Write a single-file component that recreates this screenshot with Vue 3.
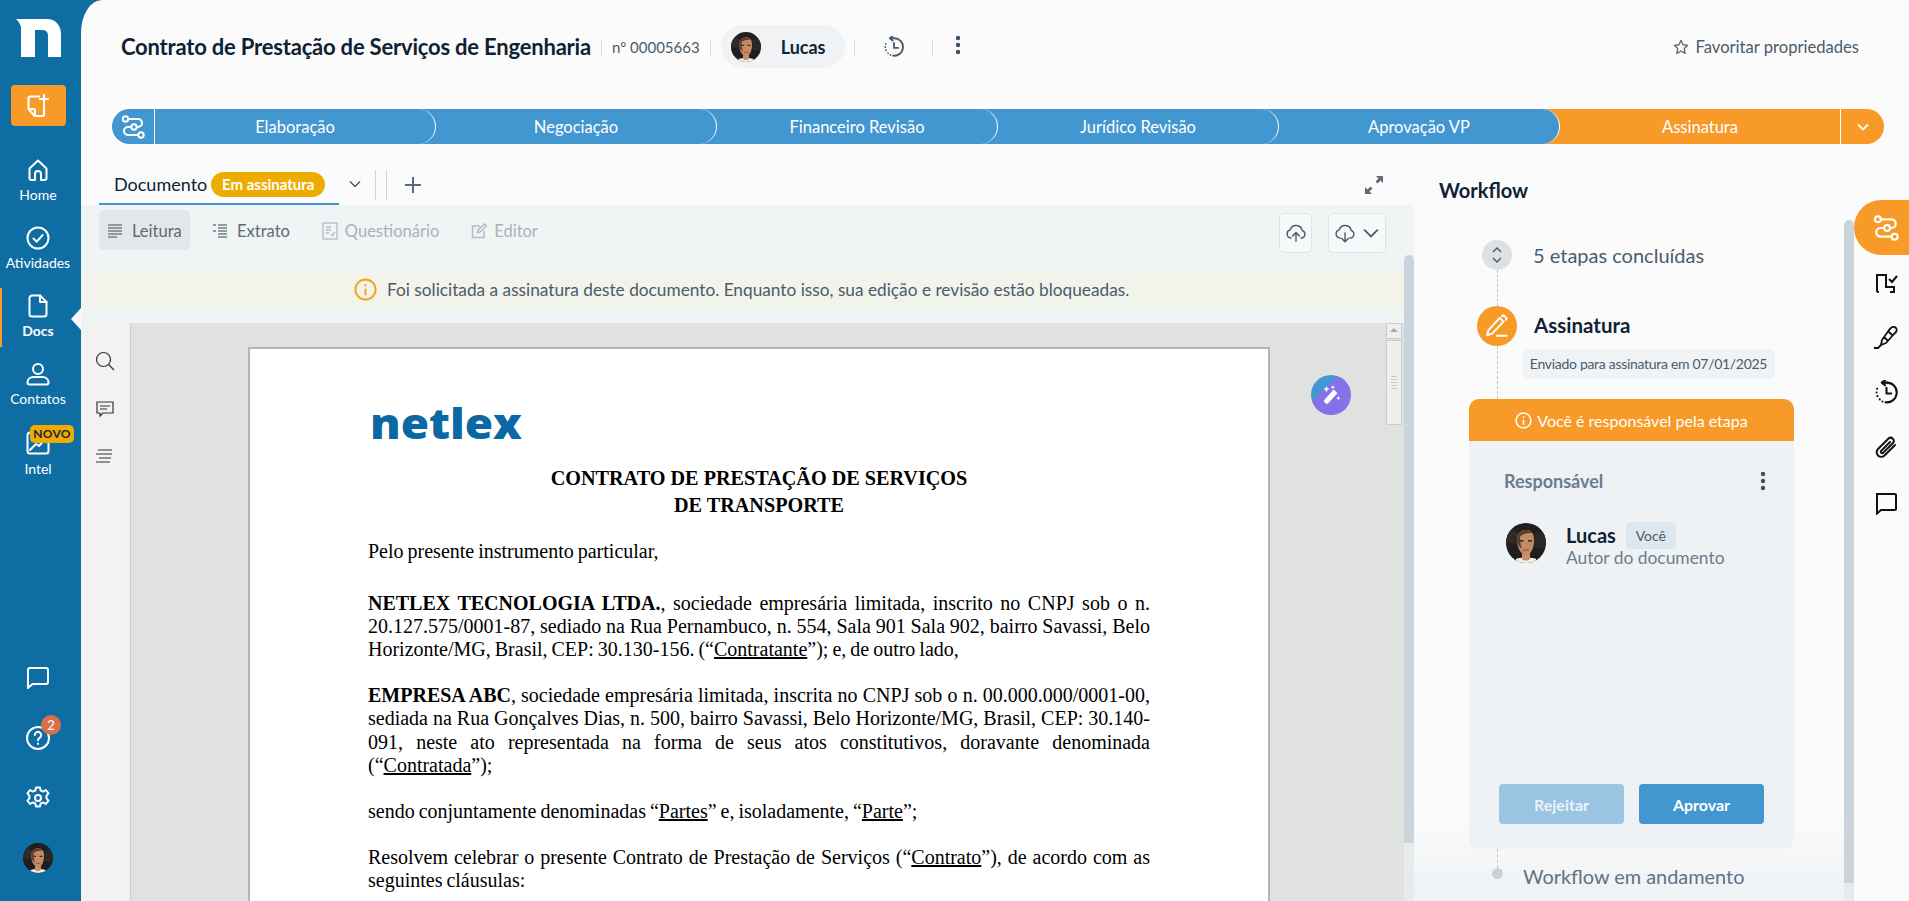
<template>
  <div class="app">
    <svg class="defs" width="0" height="0" aria-hidden="true">
      <defs>
        <clipPath id="avatar-clip"><circle cx="20" cy="20" r="20" /></clipPath>
        <symbol id="avatar" viewBox="0 0 40 40">
          <g clip-path="url(#avatar-clip)">
            <rect width="40" height="40" fill="#1f1d1d" />
            <circle cx="6" cy="14" r="7" fill="#2e2b2a" />
            <circle cx="33" cy="17" r="8" fill="#2a2827" />
            <path d="M10 36c3-2 17-2 20 0v6H10z" fill="#f2efe9" />
            <path d="M16 27h8v9c-2 2-6 2-8 0z" fill="#c98e63" />
            <path d="M11 17c0-7 4-10 9-10s8 3 8 10c0 8-3 15-8 15s-9-7-9-15z" fill="#c48c63" />
            <path d="M11 17c0-7 4-10 9-10 3 0 5 1 6 3-5 0-10 1-12 4 0 5 1 9 2 12-3-2-5-5-5-9z" fill="#5f3d2c" />
            <rect x="13.5" y="17" width="4" height="1.6" fill="#3a2a24" />
            <rect x="22" y="17" width="4" height="1.6" fill="#3a2a24" />
            <rect x="17" y="26.5" width="6" height="1.2" fill="#8d5540" />
          </g>
        </symbol>
        <symbol id="route" viewBox="0 0 24 24">
          <g fill="none" stroke="currentColor" stroke-width="2">
            <circle cx="4.5" cy="4" r="2.7" />
            <circle cx="13" cy="12" r="2.7" />
            <circle cx="20" cy="20" r="2.7" />
            <path d="M7.2 4H17a4 4 0 0 1 0 8h-1.3M10.3 12H7a4 4 0 0 0 0 8h10.3" />
          </g>
        </symbol>
        <symbol id="history" viewBox="0 0 24 24">
          <g fill="none" stroke="currentColor" stroke-width="2" stroke-linecap="round" stroke-linejoin="round">
            <path d="M12 2.5a9.5 9.5 0 1 1-1 18.9" />
            <path d="M12 2.5H7.5M7.5 2.5l3-2.3M7.5 2.5l3 2.6" />
            <path d="M3 8.5v0M2.5 12v0M3.3 15.5v0M5.5 18.6v0M8 20.6v0" />
            <path d="M12 7.5V13h4.5" />
          </g>
        </symbol>
        <symbol id="dots" viewBox="0 0 6 20">
          <circle cx="3" cy="3" r="2.2" fill="currentColor" />
          <circle cx="3" cy="10" r="2.2" fill="currentColor" />
          <circle cx="3" cy="17" r="2.2" fill="currentColor" />
        </symbol>
      </defs>
    </svg>

    <aside class="sidebar">
      <svg class="logo" width="45" height="38" viewBox="0 0 45 38">
        <path d="M0 0H31C39 0 45 6 45 15V38H32V17C32 13 30 11 26 11H19V38H5V9C5 6 3 3 0 0Z" fill="#fff" />
      </svg>
      <button class="new-doc">
        <svg width="24" height="24" viewBox="0 0 24 24" fill="none" stroke="#fff" stroke-width="2.2" stroke-linejoin="round" stroke-linecap="round">
          <path d="M13 2.5H4a1.5 1.5 0 0 0-1.500 1.500v11l6 7h8a1.500 1.500 0 0 0 1.500-1.500V11" />
          <path d="M3 15h4.500a1.500 1.500 0 0 1 1.500 1.500V22" />
          <path d="M18 1v8M14 5h8" />
        </svg>
      </button>
      <nav class="nav">
        <a class="nav-item">
          <svg class="nav-icon" viewBox="0 0 24 24"><path d="M3.500 10.500 12 2.500l8.500 8v9.500a2 2 0 0 1-2 2H15v-6a3 3 0 0 0-6 0v6H5.500a2 2 0 0 1-2-2z" /></svg>
          <span>Home</span>
        </a>
        <a class="nav-item">
          <svg class="nav-icon" viewBox="0 0 24 24"><circle cx="12" cy="12" r="10.500" /><path d="m7.500 12.500 3.200 3.200 6-6.700" /></svg>
          <span>Atividades</span>
        </a>
        <a class="nav-item active">
          <svg class="nav-icon" viewBox="0 0 24 24"><path d="M14 1.500H6a2.500 2.500 0 0 0-2.500 2.500v16A2.500 2.500 0 0 0 6 22.500h12a2.500 2.500 0 0 0 2.500-2.500V8z" /><path d="M14 1.500V8h6.500" /></svg>
          <span>Docs</span>
          <i class="notch"></i>
        </a>
        <a class="nav-item">
          <svg class="nav-icon" viewBox="0 0 24 24"><circle cx="12" cy="7" r="5" /><path d="M1.500 20.500c0-3.500 3-5.500 6-5.500h9c3 0 6 2 6 5.500 0 1.300-1 2-2 2h-17c-1 0-2-.7-2-2z" /></svg>
          <span>Contatos</span>
        </a>
        <a class="nav-item intel">
          <svg class="nav-icon" viewBox="0 0 24 24"><rect x="1.500" y="1.500" width="21" height="21" rx="2.500" /><path d="m4 19 6-6 3 2 6-7" /></svg>
          <span>Intel</span>
          <b class="novo">NOVO</b>
        </a>
      </nav>
      <div class="nav-bottom">
        <a class="nav-low">
          <svg class="nav-icon" viewBox="0 0 24 24"><path d="M4 2h16a2 2 0 0 1 2 2v12a2 2 0 0 1-2 2H6.500L2 22V4a2 2 0 0 1 2-2z" /></svg>
        </a>
        <a class="nav-low">
          <svg class="nav-icon" viewBox="0 0 24 24"><circle cx="12" cy="12" r="11" /><path d="M8.800 9a3.200 3.200 0 1 1 4.800 2.800c-1 .6-1.600 1.200-1.600 2.400M12 17.500v.5" /></svg>
          <b class="count">2</b>
        </a>
        <a class="nav-low">
          <svg class="nav-icon" viewBox="0 0 24 24"><circle cx="12" cy="12" r="3" /><path d="M10 1.500h4l.7 3 2.500 1.100 2.700-1.600 2.600 3.400-2 2.200v2.800l2 2.200-2.600 3.400-2.700-1.600-2.500 1.100-.7 3h-4l-.7-3-2.500-1.100L4 18l-2.600-3.400 2-2.200V9.600l-2-2.200L4 4l2.800 1.600 2.500-1.100z" /></svg>
        </a>
        <a class="nav-low">
          <svg width="30" height="30"><use href="#avatar" /></svg>
        </a>
      </div>
    </aside>

    <main class="main">
      <header class="header">
        <h1 class="title">Contrato de Prestação de Serviços de Engenharia</h1>
        <i class="sep"></i>
        <span class="number">nº 00005663</span>
        <i class="sep"></i>
        <div class="owner">
          <svg width="30" height="30"><use href="#avatar" /></svg>
          <span>Lucas</span>
        </div>
        <i class="sep sep-b"></i>
        <svg class="head-history" width="22" height="22"><use href="#history" /></svg>
        <i class="sep sep-c"></i>
        <svg class="head-dots" width="6" height="20"><use href="#dots" /></svg>
        <a class="favorite">
          <svg width="16" height="16" viewBox="0 0 24 24" fill="none" stroke="#54677a" stroke-width="2" stroke-linejoin="round"><path d="m12 2 3 6.600 7 .9-5.100 4.900 1.300 7.100L12 18l-6.200 3.500 1.300-7.100L2 9.500l7-.9z" /></svg>
          Favoritar propriedades
        </a>
      </header>

      <div class="stages">
        <div class="stage-icon"><svg width="24" height="24"><use href="#route" /></svg></div>
        <div
          v-for="(stage, i) in stages"
          :key="stage"
          class="stage"
          :class="{ current: i === stages.length - 1 }"
          :style="{ zIndex: stages.length - i }"
        >{{ stage }}</div>
        <div class="stage-more">
          <svg width="14" height="14" viewBox="0 0 14 14" fill="none" stroke="#fff" stroke-width="1.800"><path d="m2 4.500 5 5 5-5" /></svg>
        </div>
      </div>

      <div class="body">
        <section class="doc">
          <div class="tabs">
            <div class="tab">
              <span>Documento</span>
              <b class="status">Em assinatura</b>
              <svg class="tab-chevron" width="14" height="14" viewBox="0 0 14 14" fill="none" stroke="#4a5b6b" stroke-width="1.500"><path d="m2 4.500 5 5 5-5" /></svg>
            </div>
            <i class="tab-sep"></i>
            <svg class="tab-plus" width="18" height="18" viewBox="0 0 18 18" stroke="#5d6b78" stroke-width="2"><path d="M9 1v16M1 9h16" /></svg>
            <svg class="expand" width="20" height="20" viewBox="0 0 20 20" fill="#5d6b78">
              <path d="M12 1h7v7l-2.500-2.500-3 3-2-2 3-3zM8 19H1v-7l2.500 2.500 3-3 2 2-3 3z" />
            </svg>
          </div>

          <div class="toolbar">
            <a class="mode selected">
              <svg width="16" height="16" viewBox="0 0 16 16" stroke="#74808c" stroke-width="1.300"><path d="M1 2h14M1 5h14M1 8h14M1 11h14M1 14h9" /></svg>
              Leitura
            </a>
            <a class="mode">
              <svg width="16" height="16" viewBox="0 0 16 16" stroke="#74808c" stroke-width="1.300"><path d="M1 2h3M6 2h9M6 5h9M6 8h9M1 8h3M6 11h9M6 14h9" /></svg>
              Extrato
            </a>
            <a class="mode off quiz">
              <svg width="16" height="18" viewBox="0 0 16 18" fill="none" stroke="#b3bbc3" stroke-width="1.300"><rect x="1" y="1" width="14" height="16" /><path d="M4 5h5M4 8h5M4 11h3M9 12l1.500 1.500L13 10" /></svg>
              Questionário
            </a>
            <a class="mode off editor">
              <svg width="16" height="16" viewBox="0 0 16 16" fill="none" stroke="#b3bbc3" stroke-width="1.500"><path d="M9 3H1.500v11.500H13V8M6.500 9.500 7 7l6.500-6 2 2L9 9z" /></svg>
              Editor
            </a>
            <button class="tool-btn up">
              <svg width="20" height="20" viewBox="0 0 24 24" fill="none" stroke="#4a5b6b" stroke-width="1.700" stroke-linecap="round" stroke-linejoin="round"><path d="M6 18a5 5 0 0 1-1-9.800 7.500 7.500 0 0 1 14.500 1A4.500 4.500 0 0 1 18 18M12 22V12M8 15.500l4-4 4 4" /></svg>
            </button>
            <button class="tool-btn down">
              <svg width="20" height="20" viewBox="0 0 24 24" fill="none" stroke="#4a5b6b" stroke-width="1.700" stroke-linecap="round" stroke-linejoin="round"><path d="M6 18a5 5 0 0 1-1-9.800 7.500 7.500 0 0 1 14.500 1A4.500 4.500 0 0 1 18 18M12 12v10M8 18.500l4 4 4-4" /></svg>
              <svg width="16" height="16" viewBox="0 0 14 14" fill="none" stroke="#4a5b6b" stroke-width="1.500"><path d="m1 4 6 6 6-6" /></svg>
            </button>
          </div>

          <div class="notice">
            <svg width="23" height="23" viewBox="0 0 24 24" fill="none" stroke="#eda80f" stroke-width="2"><circle cx="12" cy="12" r="10.500" /><path d="M12 11v7M12 6.500v2" /></svg>
            Foi solicitada a assinatura deste documento. Enquanto isso, sua edição e revisão estão bloqueadas.
          </div>
          <div class="strip"></div>

          <div class="viewer">
            <div class="side-tools">
              <svg width="20" height="20" viewBox="0 0 20 20" fill="none" stroke="#333" stroke-width="1.200"><circle cx="8.500" cy="8.500" r="7" /><path d="m13.500 13.500 5.500 5.500" /></svg>
              <svg width="20" height="20" viewBox="0 0 20 20" fill="none" stroke="#333" stroke-width="1.200"><path d="M2 3h16v11H8l-3 3v-3H2zM5 7h10M5 10h7" /></svg>
              <svg width="20" height="20" viewBox="0 0 20 20" fill="none" stroke="#333" stroke-width="1.200"><path d="M3 3h14M1 7h16M4 11h12M1 15h14" /></svg>
            </div>
            <div class="canvas">
              <article class="page">
                <div class="page-logo">netlex</div>
                <h2 class="page-title">CONTRATO DE PRESTAÇÃO DE SERVIÇOS<br />DE TRANSPORTE</h2>
                <p class="first">Pelo presente instrumento particular,</p>
                <p class="party"><b>NETLEX TECNOLOGIA LTDA.</b>, sociedade empresária limitada, inscrito no CNPJ sob o n. 20.127.575/0001-87, sediado na Rua Pernambuco, n. 554, Sala 901 Sala 902, bairro Savassi, Belo Horizonte/MG, Brasil, CEP: 30.130-156. (“<u>Contratante</u>”); e, de outro lado,</p>
                <p><b>EMPRESA ABC</b>, sociedade empresária limitada, inscrita no CNPJ sob o n. 00.000.000/0001-00, sediada na Rua Gonçalves Dias, n. 500, bairro Savassi, Belo Horizonte/MG, Brasil, CEP: 30.140-091, neste ato representada na forma de seus atos constitutivos, doravante denominada (“<u>Contratada</u>”);</p>
                <p>sendo conjuntamente denominadas “<u>Partes</u>” e, isoladamente, “<u>Parte</u>”;</p>
                <p>Resolvem celebrar o presente Contrato de Prestação de Serviços (“<u>Contrato</u>”), de acordo com as seguintes cláusulas:</p>
              </article>
              <button class="wand">
                <svg width="22" height="22" viewBox="0 0 24 24" fill="#fff"><path d="m15 6 4 4L9 21a2 2 0 0 1-3 0l-1-1a2 2 0 0 1 0-3z" /><path d="M7 2l1 2.500L10.500 5.500 8 6.500 7 9 6 6.500 3.500 5.500 6 4.500zM14 1l.7 1.700 1.800.8-1.800.7L14 6l-.7-1.800-1.800-.7 1.800-.8zM20 13l.7 1.800 1.800.7-1.800.7L20 18l-.7-1.800-1.800-.7 1.800-.7z" /></svg>
              </button>
              <div class="old-scroll">
                <span class="old-up"></span>
                <span class="old-thumb"></span>
              </div>
            </div>
          </div>
          <span class="doc-scroll"></span>
        </section>

        <section class="workflow">
          <h2 class="wf-title">Workflow</h2>
          <div class="steps">
            <div class="step-done">
              <span class="collapse">
                <svg width="12" height="18" viewBox="0 0 12 18" fill="none" stroke="#4a5b6b" stroke-width="1.500"><path d="m2 6 4-4 4 4M2 12l4 4 4-4" /></svg>
              </span>
              <span>5 etapas concluídas</span>
            </div>
            <i class="dash"></i>
            <div class="step-now">
              <span class="step-badge">
                <svg width="26" height="26" viewBox="0 0 24 24" fill="none" stroke="#fff" stroke-width="1.800" stroke-linecap="round" stroke-linejoin="round"><path d="M14.500 4.500 18 8 7.500 19 3 20.500 4 16zM16.500 3l1.500-1 3 3-1 1.500M12 21h9" /></svg>
              </span>
              <span>Assinatura</span>
            </div>
            <div class="step-note"><span>Enviado para assinatura em 07/01/2025</span></div>

            <div class="card">
              <div class="card-head">
                <svg width="17" height="17" viewBox="0 0 24 24" fill="none" stroke="#fff" stroke-width="2.200"><circle cx="12" cy="12" r="10.500" /><path d="M12 11v7M12 6v2.500" /></svg>
                Você é responsável pela etapa
              </div>
              <div class="card-body">
                <div class="card-row">
                  <span>Responsável</span>
                  <svg width="6" height="20"><use href="#dots" /></svg>
                </div>
                <div class="person">
                  <svg width="40" height="40"><use href="#avatar" /></svg>
                  <div class="person-info">
                    <div class="person-name">Lucas <small>Você</small></div>
                    <div class="person-role">Autor do documento</div>
                  </div>
                </div>
                <div class="card-actions">
                  <button class="reject">Rejeitar</button>
                  <button class="approve">Aprovar</button>
                </div>
              </div>
            </div>

            <i class="dash short"></i>
            <div class="step-end">
              <i class="end-dot"></i>
              <span>Workflow em andamento</span>
            </div>
          </div>
          <span class="wf-scroll"></span>
        </section>

        <aside class="rail">
          <a class="rail-item on"><svg width="26" height="26"><use href="#route" /></svg></a>
          <a class="rail-item">
            <svg width="24" height="24" viewBox="0 0 24 24" fill="none" stroke="#111" stroke-width="2"><path d="M3 21V4h9v12h8v5h-4M3 21h2M15 8l3 3 5-6" /></svg>
          </a>
          <a class="rail-item">
            <svg width="24" height="24" viewBox="0 0 24 24" fill="none" stroke="#111" stroke-width="1.800" stroke-linejoin="round"><path d="m15 4 2-2a3 3 0 0 1 5 4l-2 2-8 9-5 2 1-5zM14 5l5 5M10 11l4 4M7 19l-3 3H0" /></svg>
          </a>
          <a class="rail-item"><svg width="25" height="25"><use href="#history" /></svg></a>
          <a class="rail-item">
            <svg width="24" height="24" viewBox="0 0 24 24" fill="none" stroke="#111" stroke-width="2" stroke-linecap="round"><path d="M21 9 10.500 19.500a4.500 4.500 0 0 1-6.500-6.500L14.500 2.500a3.200 3.200 0 0 1 4.500 4.500L9 17a1.500 1.500 0 0 1-2-2l9-9" /></svg>
          </a>
          <a class="rail-item">
            <svg width="24" height="24" viewBox="0 0 24 24" fill="none" stroke="#111" stroke-width="2"><path d="M3 3h18a1 1 0 0 1 1 1v14a1 1 0 0 1-1 1H7l-4 3.500z" /></svg>
          </a>
        </aside>
      </div>
    </main>
  </div>
</template>

<script setup>
const stages = ['Elaboração', 'Negociação', 'Financeiro Revisão', 'Jurídico Revisão', 'Aprovação VP', 'Assinatura']
</script>

<style>
html,
body {
  margin: 0;
  overflow: hidden;
}
</style>

<style scoped>
.app {
  display: flex;
  height: 901px;
  width: 1909px;
  overflow: hidden;
  background: #0e6ea3;
  font-family: Lato, "Noto Sans", sans-serif;
  color: #4a5b6b;
}

.defs {
  position: absolute;
}

/* menu lateral */
.sidebar {
  width: 81px;
  flex: none;
  box-sizing: border-box;
  padding-right: 5px;
  display: flex;
  flex-direction: column;
  align-items: center;
  color: #fff;
}

.logo {
  margin-top: 19px;
  flex: none;
}

.new-doc {
  width: 55px;
  height: 41px;
  margin-top: 28px;
  border: none;
  border-radius: 4px;
  background: #f79a27;
  display: flex;
  align-items: center;
  justify-content: center;
}

.nav {
  margin-top: 26px;
  width: 100%;
}

.nav-item {
  position: relative;
  height: 68px;
  padding-top: 6px;
  box-sizing: border-box;
  display: flex;
  flex-direction: column;
  align-items: center;
  font-size: 14px;
  line-height: 18px;
}

.nav-item span {
  margin-top: 4px;
}

.nav-item.intel {
  padding-top: 7px;
}

.nav-item.intel span {
  margin-top: 5px;
}

.nav-icon {
  width: 24px;
  height: 24px;
  flex: none;
  fill: none;
  stroke: #fff;
  stroke-width: 2;
  stroke-linejoin: round;
  stroke-linecap: round;
}

.nav-item.active {
  font-weight: 700;
}

.nav-item.active::before {
  content: "";
  position: absolute;
  left: 0;
  top: 0;
  bottom: 9px;
  width: 2px;
  background: #f79a27;
}

.notch {
  position: absolute;
  right: -5px;
  top: 20px;
  width: 10px;
  height: 22px;
  background: #fbfbfb;
  clip-path: polygon(100% 0, 0 50%, 100% 100%);
}

.novo {
  position: absolute;
  left: 30px;
  top: 1px;
  width: 44px;
  height: 18px;
  border-radius: 5px;
  background: #edac00;
  color: #1c2340;
  font-size: 12px;
  line-height: 18px;
  text-align: center;
  letter-spacing: 0.3px;
}

.nav-bottom {
  margin-top: auto;
  padding-bottom: 13px;
  width: 100%;
}

.nav-low {
  position: relative;
  height: 60px;
  display: flex;
  align-items: center;
  justify-content: center;
}

.count {
  position: absolute;
  left: 41px;
  top: 7px;
  width: 20px;
  height: 20px;
  border-radius: 50%;
  background: #d9704a;
  color: #fff;
  font-size: 13px;
  font-weight: 400;
  line-height: 20px;
  text-align: center;
}

/* area principal */
.main {
  flex: 1;
  min-width: 0;
  display: flex;
  flex-direction: column;
  background: #fbfbfb;
  border-top-left-radius: 21px 33px;
}

.header {
  height: 109px;
  box-sizing: border-box;
  padding: 25px 50px 41px 40px;
  display: flex;
  align-items: center;
}

.title {
  margin: 0;
  font-size: 22px;
  font-weight: 700;
  letter-spacing: -0.2px;
  color: #0f2233;
  white-space: nowrap;
}

.sep {
  width: 1px;
  height: 16px;
  margin: 0 10px;
  background: #d5dade;
}

.number {
  font-size: 15px;
  color: #4a5b6b;
}

.owner {
  margin-left: 0;
  width: 124px;
  height: 43px;
  box-sizing: border-box;
  padding-left: 10px;
  display: flex;
  align-items: center;
  gap: 20px;
  border-radius: 22px;
  background: #eff3f6;
  font-size: 18px;
  font-weight: 700;
  color: #0f2233;
}

.sep-b {
  margin: 0 28px 0 9px;
}

.sep-c {
  margin: 0 22px 0 27px;
}

.head-dots {
  color: #3d4f60;
  margin-top: -3px;
}

.favorite {
  margin-left: auto;
  display: flex;
  align-items: center;
  gap: 7px;
  font-size: 16.600px;
  color: #4a5b6b;
}

.stages {
  display: flex;
  height: 35px;
  margin: 0 24px 21px 31px;
  font-size: 16.500px;
  color: #fff;
}

.stage-icon {
  position: relative;
  z-index: 10;
  width: 43px;
  flex: none;
  box-sizing: border-box;
  padding-left: 9px;
  display: flex;
  align-items: center;
  background: #4397d0;
  border-right: 1px solid #fff;
  border-radius: 18px 0 0 18px;
}

.stage {
  position: relative;
  width: 301px;
  flex: none;
  margin-left: -20px;
  padding-left: 20px;
  box-sizing: border-box;
  display: flex;
  align-items: center;
  justify-content: center;
  background: #4397d0;
  border-right: 1.5px solid #fff;
  border-radius: 0 18px 18px 0;
}

.stage.current {
  background: #f79a27;
  border-radius: 0;
  border-right: 1px solid #fff;
}

.stage-more {
  width: 43px;
  flex: none;
  display: flex;
  align-items: center;
  justify-content: center;
  background: #f79a27;
  border-radius: 0 18px 18px 0;
}

.body {
  flex: 1;
  min-height: 0;
  display: flex;
}

/* documento */
.doc {
  position: relative;
  width: 1333px;
  flex: none;
  display: flex;
  flex-direction: column;
}

.tabs {
  height: 40px;
  flex: none;
  padding-left: 18px;
  display: flex;
  align-items: center;
}

.tab {
  width: 240px;
  height: 40px;
  flex: none;
  box-sizing: border-box;
  padding-left: 15px;
  display: flex;
  align-items: center;
  gap: 4px;
  border-bottom: 2px solid #4397d0;
  font-size: 18px;
  color: #0f2233;
}

.status {
  width: 114px;
  height: 25px;
  flex: none;
  border-radius: 13px;
  background: #edac00;
  color: #fff;
  font-size: 15px;
  line-height: 25px;
  text-align: center;
  white-space: nowrap;
}

.tab-chevron {
  flex: none;
  margin-left: 19px;
}

.tab-sep {
  width: 10px;
  height: 30px;
  margin-left: 36px;
  border-left: 1px solid #cfd5da;
  border-right: 1px solid #cfd5da;
}

.tab-plus {
  margin-left: 17px;
}

.expand {
  margin-left: auto;
  margin-right: 30px;
}

.toolbar {
  position: relative;
  height: 65px;
  flex: none;
  padding: 5px 0 0 18px;
  box-sizing: border-box;
  display: flex;
  align-items: flex-start;
  gap: 10px;
  background: #f0f4f5;
}

.mode {
  height: 40px;
  box-sizing: border-box;
  padding: 2px 12px 0;
  display: flex;
  align-items: center;
  gap: 9px;
  border-radius: 5px;
  font-size: 16.500px;
  color: #5d6b78;
}

.mode.selected {
  width: 91px;
  padding: 2px 8px 0;
  background: #e3e7ea;
}

.mode.off {
  gap: 7px;
  color: #a9b2ba;
}

.mode.quiz {
  margin-left: -2px;
}

.mode.editor {
  margin-left: -2px;
}

.tool-btn {
  height: 40px;
  margin-top: 3px;
  padding: 0;
  display: flex;
  align-items: center;
  justify-content: center;
  gap: 8px;
  background: #f6f8f9;
  border: 1px solid #dfe4e8;
  border-radius: 5px;
}

.tool-btn.up {
  width: 33px;
  margin-left: auto;
}

.tool-btn.down {
  width: 58px;
  margin-left: 6px;
  margin-right: 28px;
}

.notice {
  height: 38px;
  flex: none;
  padding-left: 273px;
  display: flex;
  align-items: center;
  gap: 10px;
  background: #f2f4ec;
  font-size: 17.250px;
  color: #4a5b6b;
}

.strip {
  height: 15px;
  flex: none;
  background: #f0f4f5;
}

.viewer {
  flex: 1;
  min-height: 0;
  display: flex;
}

.side-tools {
  width: 49px;
  flex: none;
  box-sizing: border-box;
  padding: 28px 0 0 14px;
  display: flex;
  flex-direction: column;
  gap: 28px;
  background: #f2f2f2;
}

.canvas {
  position: relative;
  flex: 1;
  margin-right: 10px;
  overflow: hidden;
  background: #e0e2e2;
  border-left: 1px solid #ccc;
}

.page {
  width: 1022px;
  height: 800px;
  margin: 24px 0 0 117px;
  box-sizing: border-box;
  padding: 57px 118px 0 118px;
  background: #fff;
  border: 1px solid #b5b5b5;
  border-width: 2px 2px 0 2px;
  font-family: "Liberation Serif", serif;
  font-size: 20px;
  word-spacing: -1px;
  line-height: 23.100px;
  color: #000;
  text-align: justify;
}

.page-logo {
  margin-left: 2px;
  height: 40px;
  font-family: "Open Sans", sans-serif;
  font-size: 42px;
  line-height: 34px;
  font-weight: 800;
  color: #0a69a5;
  transform: scaleX(1.09);
  transform-origin: left center;
}

.page-title {
  margin: 19px 0 0;
  font-size: 20.200px;
  word-spacing: 0;
  line-height: 27px;
  font-weight: 700;
  text-align: center;
}

.page p {
  margin: 23px 0 0;
}

.page p.first {
  margin-top: 21px;
}

.page p.party {
  margin-top: 29px;
}

.wand {
  position: absolute;
  left: 1180px;
  top: 52px;
  width: 40px;
  height: 40px;
  padding: 0;
  border: none;
  border-radius: 50%;
  display: flex;
  align-items: center;
  justify-content: center;
  background: linear-gradient(135deg, #4397d0 0 35%, #8771e8 35%);
}

.old-scroll {
  position: absolute;
  right: 2px;
  top: 0;
  width: 16px;
  display: flex;
  flex-direction: column;
  gap: 1px;
}

.old-up,
.old-thumb {
  display: block;
  box-sizing: border-box;
  background: #efefef;
  border: 1px solid #ccc;
}

.old-up {
  height: 16px;
}

.old-up::after {
  content: "";
  display: block;
  width: 0;
  margin: 4px auto 0;
  border: 4px solid transparent;
  border-top: 0;
  border-bottom: 4px solid #aaa;
}

.old-thumb {
  height: 85px;
  background: repeating-linear-gradient(#c9c9c9 0 1px, #efefef 1px 3px) center / 6px 14px no-repeat, #efefef;
}

.doc-scroll {
  position: absolute;
  right: 0;
  top: 90px;
  bottom: 0;
  width: 10px;
  background: linear-gradient(#ccd4db 0 588px, #e8ebec 588px);
  border-radius: 5px 5px 0 0;
}

/* workflow */
.workflow {
  position: relative;
  width: 440px;
  flex: none;
  background: #fbfbfb;
}

.workflow::after {
  content: "";
  position: absolute;
  left: 0;
  right: 10px;
  bottom: 0;
  height: 90px;
  background: linear-gradient(rgba(238, 242, 245, 0), #eef2f5);
  pointer-events: none;
}

.wf-title {
  margin: 0;
  padding: 13px 0 0 25px;
  font-size: 20px;
  line-height: 24px;
  font-weight: 700;
  color: #0f2233;
}

.wf-scroll {
  position: absolute;
  z-index: 1;
  right: 0;
  top: 55px;
  bottom: 0;
  width: 10px;
  background: linear-gradient(#ccd4db 0 663px, #e6eaec 663px);
  border-radius: 5px 5px 0 0;
}

.steps {
  position: relative;
  z-index: 1;
  width: 325px;
  margin: 38px 0 0 55px;
}

.step-done,
.step-now,
.step-end {
  display: flex;
  align-items: center;
}

.step-done {
  font-size: 20px;
  color: #4a5b6b;
}

.collapse {
  width: 30px;
  height: 30px;
  margin: 0 21px 0 13px;
  display: flex;
  align-items: center;
  justify-content: center;
  border-radius: 50%;
  background: #dde1e5;
}

.dash {
  display: block;
  width: 0;
  height: 36px;
  margin-left: 28px;
  border-left: 1px dashed #bcc4cb;
}

.dash.short {
  height: 19px;
}

.step-now {
  font-size: 20.500px;
  font-weight: 700;
  color: #0f2233;
}

.step-now > span:last-child {
  margin-top: -2px;
}

.step-badge {
  width: 40px;
  height: 40px;
  margin: 0 17px 0 8px;
  display: flex;
  align-items: center;
  justify-content: center;
  border-radius: 50%;
  background: #f79a27;
}

.step-note {
  margin-left: 28px;
  padding: 3px 0 20px 24px;
  border-left: 1px dashed #bcc4cb;
}

.step-note span {
  display: block;
  width: 253px;
  height: 30px;
  border-radius: 5px;
  background: #eff3f6;
  font-size: 14px;
  letter-spacing: -0.3px;
  line-height: 30px;
  text-align: center;
  white-space: nowrap;
}

.card {
  height: 450px;
  display: flex;
  flex-direction: column;
}

.card-head {
  height: 42px;
  flex: none;
  display: flex;
  align-items: center;
  justify-content: center;
  gap: 5px;
  border-radius: 10px 10px 0 0;
  background: #f79a27;
  color: #fff;
  font-size: 16px;
}

.card-body {
  flex: 1;
  display: flex;
  flex-direction: column;
  padding: 28px 28px 25px 35px;
  border-radius: 0 0 10px 10px;
  background: #eef2f5;
}

.card-row {
  height: 24px;
  display: flex;
  align-items: center;
  justify-content: space-between;
  font-size: 18px;
  font-weight: 700;
  color: #6b7d8e;
}

.card-row svg {
  color: #3d4f60;
}

.person {
  margin: 30px 0 0 2px;
  display: flex;
  gap: 20px;
}

.person-name {
  display: flex;
  align-items: center;
  gap: 10px;
  height: 24px;
  font-size: 20px;
  font-weight: 700;
  color: #0f2233;
}

.person-name small {
  width: 50px;
  height: 27px;
  border-radius: 5px;
  background: #dde7ef;
  font-size: 14px;
  font-weight: 400;
  line-height: 27px;
  text-align: center;
  color: #4a5b6b;
}

.person-role {
  margin-top: 0;
  font-size: 17.400px;
  color: #6b7d8e;
}

.card-actions {
  margin: auto 0 0 -5px;
  display: flex;
  gap: 15px;
}

.card-actions button {
  width: 125px;
  height: 40px;
  border: none;
  border-radius: 4px;
  color: #fff;
  font-family: inherit;
  font-size: 16px;
  font-weight: 700;
}

.reject {
  background: #99c4e2;
  color: #e9f3fa !important;
}

.approve {
  background: #4397d0;
}

.step-end {
  align-items: flex-start;
  height: 12px;
  font-size: 19.900px;
  line-height: 17px;
  color: #5f7285;
}

.end-dot {
  width: 11px;
  height: 11px;
  flex: none;
  margin: 0 20px 0 23px;
  border-radius: 50%;
  background: #c8d1d9;
}

/* trilho direito */
.rail {
  flex: 1;
  padding-top: 35px;
}

.rail-item {
  height: 55px;
  box-sizing: border-box;
  padding-left: 20px;
  display: flex;
  align-items: center;
}

.rail-item.on {
  background: #f79a27;
  color: #fff;
  border-radius: 28px 0 0 28px;
  padding-left: 19px;
}

.rail-item:not(.on) {
  color: #111;
}
</style>
